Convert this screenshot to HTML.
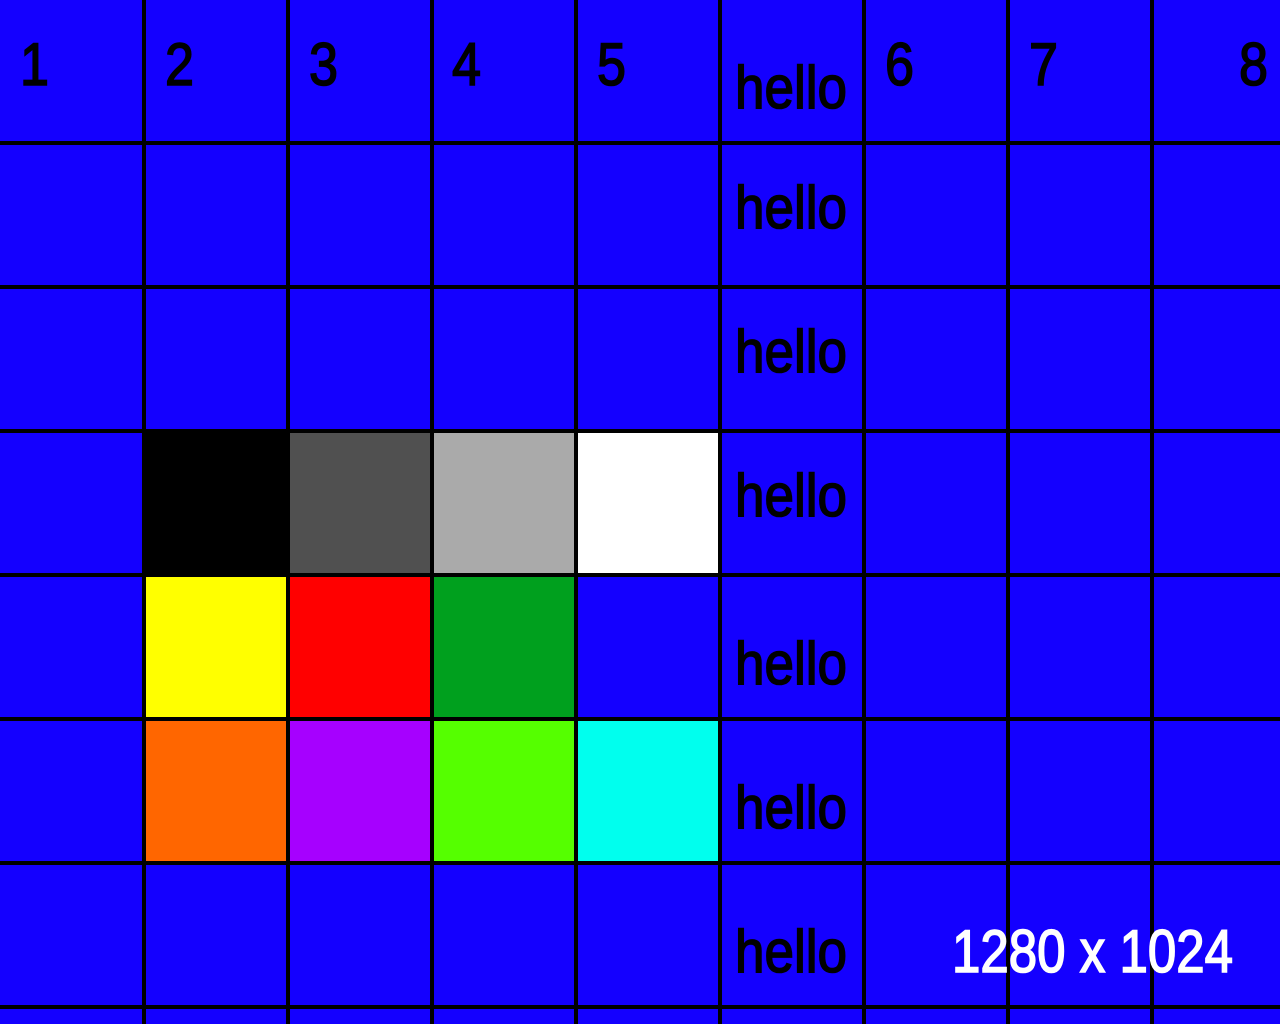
<!DOCTYPE html>
<html><head><meta charset="utf-8"><style>
html,body{margin:0;padding:0;background:#1400ff;overflow:hidden}
svg{display:block}
text{font-family:"Liberation Sans",sans-serif;font-size:60px}
</style></head><body>
<svg width="1280" height="1024" xmlns="http://www.w3.org/2000/svg">
<rect width="1280" height="1024" fill="#1400ff"/>
<rect x="144" y="432" width="144" height="144" fill="#000"/>
<rect x="288" y="432" width="144" height="144" fill="#505050"/>
<rect x="432" y="432" width="144" height="144" fill="#aaaaaa"/>
<rect x="576" y="432" width="144" height="144" fill="#ffffff"/>
<rect x="144" y="576" width="144" height="144" fill="#ffff00"/>
<rect x="288" y="576" width="144" height="144" fill="#ff0000"/>
<rect x="432" y="576" width="144" height="144" fill="#00a01e"/>
<rect x="144" y="720" width="144" height="144" fill="#ff6600"/>
<rect x="288" y="720" width="144" height="144" fill="#a600ff"/>
<rect x="432" y="720" width="144" height="144" fill="#55ff00"/>
<rect x="576" y="720" width="144" height="144" fill="#00ffee"/>
<g fill="#000">
<rect x="142" y="0" width="4" height="1024"/>
<rect x="286" y="0" width="4" height="1024"/>
<rect x="430" y="0" width="4" height="1024"/>
<rect x="574" y="0" width="4" height="1024"/>
<rect x="718" y="0" width="4" height="1024"/>
<rect x="862" y="0" width="4" height="1024"/>
<rect x="1006" y="0" width="4" height="1024"/>
<rect x="1150" y="0" width="4" height="1024"/>
<rect x="0" y="141" width="1280" height="4"/>
<rect x="0" y="285" width="1280" height="4"/>
<rect x="0" y="429" width="1280" height="4"/>
<rect x="0" y="573" width="1280" height="4"/>
<rect x="0" y="717" width="1280" height="4"/>
<rect x="0" y="861" width="1280" height="4"/>
<rect x="0" y="1005" width="1280" height="4"/>
</g>
<g fill="#000" stroke="#000" stroke-width="1.6">
<text transform="translate(20,85) scale(0.87,1)">1</text>
<text transform="translate(165,85) scale(0.87,1)">2</text>
<text transform="translate(309,85) scale(0.87,1)">3</text>
<text transform="translate(452,85) scale(0.87,1)">4</text>
<text transform="translate(597,85) scale(0.87,1)">5</text>
<text transform="translate(885,85) scale(0.87,1)">6</text>
<text transform="translate(1029,85) scale(0.87,1)">7</text>
<text transform="translate(1239,85) scale(0.87,1)">8</text>
</g>
<g fill="#000" stroke="#000" stroke-width="1.6">
<text x="735" y="108" textLength="112" lengthAdjust="spacingAndGlyphs">hello</text>
<text x="735" y="228" textLength="112" lengthAdjust="spacingAndGlyphs">hello</text>
<text x="735" y="372" textLength="112" lengthAdjust="spacingAndGlyphs">hello</text>
<text x="735" y="516" textLength="112" lengthAdjust="spacingAndGlyphs">hello</text>
<text x="735" y="684" textLength="112" lengthAdjust="spacingAndGlyphs">hello</text>
<text x="735" y="828" textLength="112" lengthAdjust="spacingAndGlyphs">hello</text>
<text x="735" y="972" textLength="112" lengthAdjust="spacingAndGlyphs">hello</text>
</g>
<text x="952" y="972" fill="#fff" stroke="#fff" stroke-width="1.6" textLength="281" lengthAdjust="spacingAndGlyphs">1280 x 1024</text>
</svg>
</body></html>
